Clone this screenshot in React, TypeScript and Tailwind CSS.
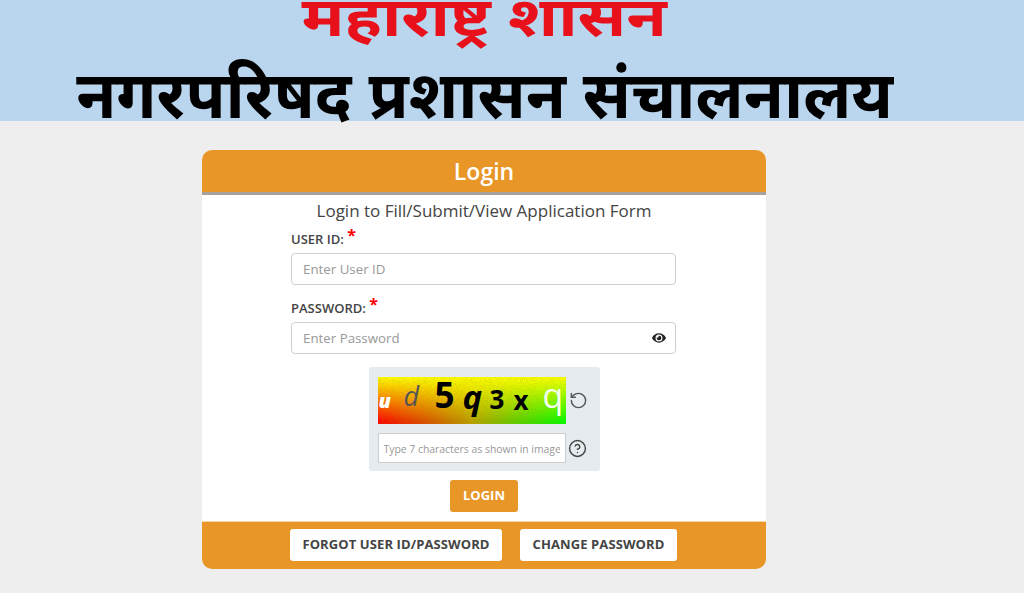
import React from 'react';
import { RotateCcw, CircleHelp } from 'lucide-react';
import { FaEye } from 'react-icons/fa';

const FieldLabel = ({ text }: { text: string }) => (
  <label className="block h-[21px] text-[13px] leading-[21px] font-semibold text-[#444]">
    {text} <span className="relative -top-[3px] text-[16px] font-bold text-[#f00]">*</span>
  </label>
);

const Captcha = () => (
  <div className="relative h-[47px] w-[188px] bg-[linear-gradient(to_bottom,#ffff00_0%,rgba(255,255,0,0)_95%),linear-gradient(to_right,#ff0000,#b8a000_50%,#00ff00)]">
    {/* speckle on the captcha picture */}
    <svg className="absolute inset-0 h-full w-full opacity-25" aria-hidden="true">
      <filter id="speckle">
        <feTurbulence type="fractalNoise" baseFrequency="1.1" numOctaves="2" />
        <feColorMatrix values="0 0 0 0 0.3  0 0 0 0 0.3  0 0 0 0 0  0 0 0 3 -1.3" />
      </filter>
      <rect width="100%" height="100%" filter="url(#speckle)" />
    </svg>
    <div className="absolute inset-0 font-['Open_Sans',sans-serif] leading-none">
      <span className="absolute left-[1px] top-[14px] text-[20px] font-extrabold italic text-white">u</span>
      <span className="absolute left-[26px] top-[5px] text-[27px] italic text-[#555]">d</span>
      <span className="absolute left-[57px] top-[0px] text-[35px] font-bold text-black">5</span>
      <span className="absolute left-[85px] top-[3px] text-[33px] font-bold italic text-black">q</span>
      <span className="absolute left-[112px] top-[9px] text-[26px] font-bold text-black">3</span>
      <span className="absolute left-[136px] top-[10px] text-[26px] font-bold text-black">x</span>
      <span className="absolute left-[165px] top-[1px] text-[34px] text-[#f4fff0]">q</span>
    </div>
  </div>
);

export default function App() {
  return (
    <div className="min-h-[593px] bg-[#eeeeee] font-['Open_Sans',sans-serif]">
      <header className="flex h-[121px] flex-col items-center bg-[#bad5ee] pr-[56px] font-['Noto_Sans_Devanagari','Noto_Sans',sans-serif] font-bold">
        <div className="h-[74px] scale-x-[1.2] text-[55px] leading-[46px] whitespace-nowrap text-[#e8101a]">महाराष्ट्र शासन</div>
        <div className="h-[47px] scale-x-[0.99] text-[66px] leading-[56px] whitespace-nowrap text-black">नगरपरिषद प्रशासन संचालनालय</div>
      </header>

      <main className="flex pt-[29px] pl-[202px]">
        <div className="w-[564px] overflow-hidden rounded-[10px] bg-white">
          <div className="flex h-[45px] items-center justify-center border-b-[3px] border-[#a9a29a] bg-[#e79627] text-[23px] font-semibold text-white">
            Login
          </div>
          <p className="mt-[4px] text-center text-[17px] leading-[24px] text-[#444]">
            Login to Fill/Submit/View Application Form
          </p>

          <form className="mx-auto mt-[5px] w-[386px]">
            <FieldLabel text="USER ID:" />
            <input
              placeholder="Enter User ID"
              className="mt-[4px] block h-[32px] w-[385px] rounded-[4px] border border-[#cfcfcf] bg-white px-[11px] text-[13.3px] text-[#444] placeholder:text-[#999]"
            />
            <div className="mt-[12px]">
              <FieldLabel text="PASSWORD:" />
            </div>
            <div className="relative mt-[4px] w-[385px]">
              <input
                placeholder="Enter Password"
                className="block h-[32px] w-full rounded-[4px] border border-[#cfcfcf] bg-white px-[11px] text-[13.3px] text-[#444] placeholder:text-[#999]"
              />
              <FaEye className="absolute right-[10px] top-[9px] h-[14px] w-[14px] text-[#222]" />
            </div>
          </form>

          <div className="mx-auto mt-[13px] flex h-[104px] w-[231px] flex-col gap-[9px] rounded-[3px] bg-[#e5ebef] py-[10px] pl-[9px]">
            <div className="flex items-center gap-[3px]">
              <Captcha />
              <RotateCcw className="h-[19px] w-[19px] text-[#555]" strokeWidth={1.8} />
            </div>
            <div className="flex items-center gap-[2px]">
              <input
                placeholder="Type 7 characters as shown in image"
                className="block h-[30px] w-[188px] border border-[#ccc] bg-white px-[5px] pt-[1px] text-[10.4px] text-[#444] placeholder:text-[#999]"
              />
              <CircleHelp className="h-[19px] w-[19px] text-[#444]" strokeWidth={1.8} />
            </div>
          </div>

          <div className="mt-[9px] flex justify-center">
            <button className="h-[32px] w-[68px] rounded-[3px] bg-[#e79627] text-[13px] font-bold text-white">
              LOGIN
            </button>
          </div>

          <div className="mt-[9px] flex h-[48px] items-center justify-center gap-[18px] border-t border-[#f5d5a5] bg-[#e79627] pr-[1px] pb-[2px]">
            <button className="h-[32px] w-[212px] rounded-[3px] bg-white text-[13px] font-bold tracking-[0.1px] text-[#444]">
              FORGOT USER ID/PASSWORD
            </button>
            <button className="h-[32px] w-[157px] rounded-[3px] bg-white text-[13px] font-bold tracking-[0.1px] text-[#444]">
              CHANGE PASSWORD
            </button>
          </div>
        </div>
      </main>
    </div>
  );
}
